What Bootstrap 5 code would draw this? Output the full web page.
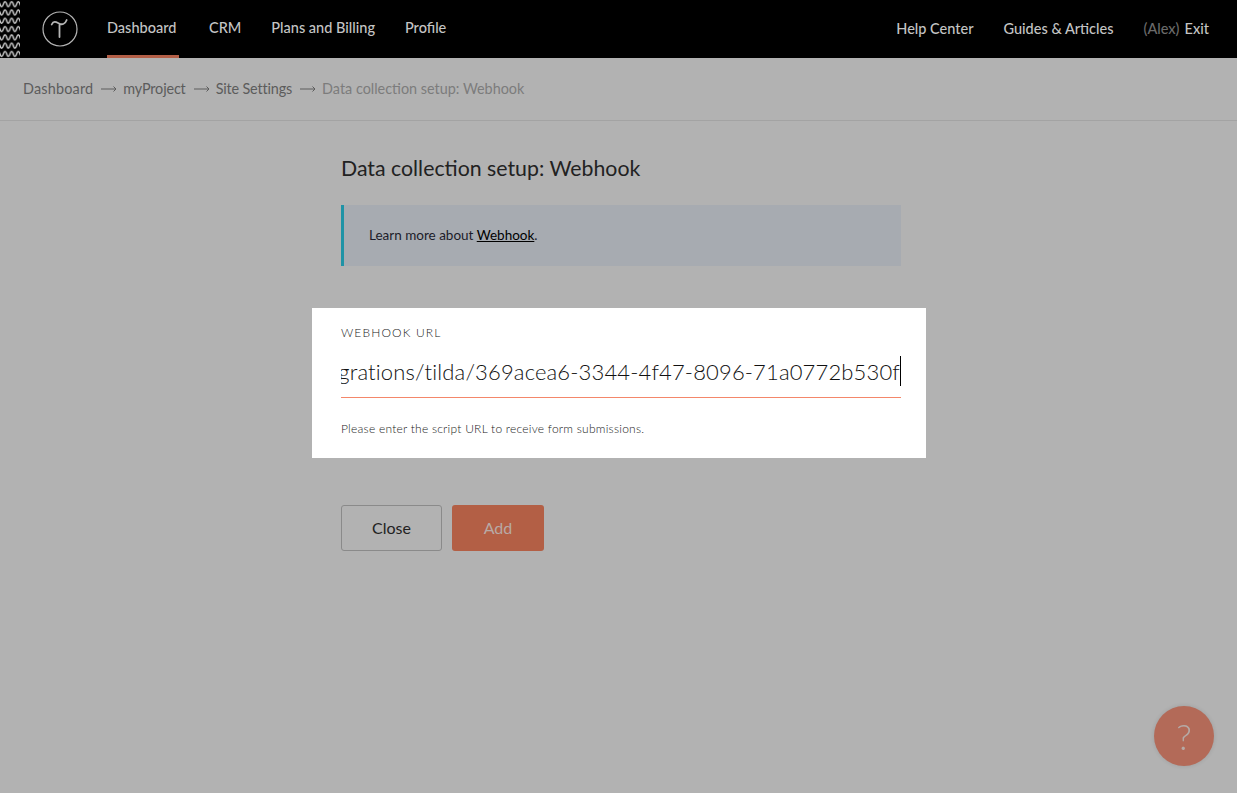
<!DOCTYPE html>
<html lang="en">
<head>
    <meta charset="UTF-8">
    <meta name="viewport" content="width=device-width, initial-scale=1.0">
    <title>Data collection setup: Webhook</title>
    <link href="https://cdn.jsdelivr.net/npm/bootstrap@5.3.0/dist/css/bootstrap.min.css" rel="stylesheet">
    <style>
        body {
            background-color: #b2b2b2;
            font-family: "Lato", "Liberation Sans", sans-serif;
            height: 793px;
            overflow: hidden;
        }
        .top-bar {
            height: 58px;
            background-color: #000;
            padding-right: 28px;
        }
        .wave-strip {
            width: 20px;
            height: 58px;
            flex: none;
        }
        .logo-mark {
            width: 36px;
            height: 36px;
            margin: 0 29px 0 22px;
            flex: none;
        }
        .top-links {
            gap: 30px;
        }
        .top-link {
            height: 58px;
            display: flex;
            align-items: center;
            color: #c4c4c4;
            font-size: 14.5px;
            font-weight: 500;
            text-decoration: none;
            white-space: nowrap;
            box-sizing: border-box;
        }
        .top-links-main .top-link {
            padding-bottom: 2px;
        }
        .top-link.current {
            border-bottom: 3px solid #b35f47;
            padding-top: 1px;
            padding-bottom: 0;
            width: 72px;
        }
        .user-name {
            color: #6a6a6a;
            margin-right: 5px;
        }
        .crumb-bar {
            height: 63px;
            padding-left: 23px;
            border-bottom: 1px solid #a3a3a3;
            font-size: 14.4px;
            color: #5c5c5c;
        }
        .crumb-bar a {
            color: #5c5c5c;
            text-decoration: none;
        }
        .crumb-first {
            letter-spacing: .2px;
        }
        .crumb-mid {
            letter-spacing: -.15px;
        }
        .crumb-arrow {
            width: 16px;
            height: 8px;
            margin: 0 6px 0 8px;
        }
        .crumb-last {
            color: #7c7c7c;
        }
        .setup-col {
            width: 560px;
            margin-left: 341px;
        }
        .setup-title {
            font-size: 21.3px;
            font-weight: 400;
            line-height: 30px;
            color: #222;
            margin: 32px 0 22px;
        }
        .info-note {
            height: 61px;
            padding-left: 25px;
            background-color: #a7abb1;
            border-left: 3px solid #1f93a6;
            font-size: 13.5px;
            color: #1c1c2a;
        }
        .info-note a {
            color: #000;
        }
        .hook-panel {
            width: 614px;
            height: 150px;
            margin: 42px 0 47px -29px;
            padding: 17px 25px 0 29px;
            background-color: #fff;
        }
        .hook-label {
            font-size: 12px;
            line-height: 16px;
            letter-spacing: 1.15px;
            color: #222;
            font-weight: 300;
        }
        .hook-field {
            height: 46px;
            margin-top: 11px;
            padding-top: 3px;
            border-bottom: 1px solid #f4876a;
            font-size: 22px;
            font-weight: 300;
            line-height: 34px;
            color: #111;
            white-space: nowrap;
            overflow: hidden;
            letter-spacing: .15px;
        }
        .hook-caret {
            display: inline-block;
            flex: none;
            width: 1px;
            height: 30px;
            margin-top: 1px;
            background-color: #000;
        }
        .hook-hint {
            font-size: 12px;
            line-height: 16px;
            font-weight: 300;
            color: #222;
            margin-top: 23px;
            letter-spacing: .24px;
        }
        .btn-close-setup, .btn-add-setup {
            height: 46px;
            font-size: 16px;
            border-radius: 3px;
            padding: 0;
        }
        .btn-close-setup {
            width: 101px;
            background-color: transparent;
            border: 1px solid #8a8a8a;
            color: #222;
        }
        .btn-add-setup {
            width: 92px;
            background-color: #b35f45;
            border: 0;
            color: #b8aaa5;
        }
        .setup-actions {
            gap: 10px;
        }
        .help-bubble {
            position: fixed;
            left: 1154px;
            top: 706px;
            width: 60px;
            height: 60px;
            border-radius: 50%;
            background-color: #b36a58;
            color: #b5aaa6;
            font-size: 36px;
            font-weight: 300;
            box-shadow: 0 0 4px rgba(0, 0, 0, .12);
        }
    </style>
</head>
<body>
    <nav class="top-bar d-flex align-items-center position-relative">
        <svg class="wave-strip" viewBox="0 0 20 58">
            <defs>
                <pattern id="waves" width="6.67" height="8.3" patternUnits="userSpaceOnUse">
                    <path d="M-3.33 4.150Q-1.670 -1 0 4.150T3.330 4.150T6.670 4.150T10 4.150" fill="none" stroke="#d0d0d0" stroke-width="1.400"/>
                </pattern>
            </defs>
            <rect width="20" height="58" fill="url(#waves)"/>
        </svg>
        <svg class="logo-mark" viewBox="0 0 36 36">
            <circle cx="18" cy="18" r="17" fill="none" stroke="#b5b5b5" stroke-width="1.200"/>
            <path d="M17.500 13V26M9.700 13.500C11.500 9.500 14 11 17 12.500S23 13.500 24.700 9" fill="none" stroke="#b5b5b5" stroke-width="1.800" stroke-linecap="round"/>
        </svg>
        <div class="d-flex top-links top-links-main flex-grow-1">
            <a class="top-link current" href="#">Dashboard</a>
            <a class="top-link" href="#">CRM</a>
            <a class="top-link" href="#">Plans and Billing</a>
            <a class="top-link" href="#">Profile</a>
        </div>
        <div class="d-flex top-links">
            <a class="top-link" href="#">Help Center</a>
            <a class="top-link" href="#">Guides &amp; Articles</a>
            <a class="top-link" href="#"><span class="user-name">(Alex)</span>Exit</a>
        </div>
    </nav>

    <div class="crumb-bar d-flex align-items-center">
        <a class="crumb-first" href="#">Dashboard</a>
        <svg class="crumb-arrow" viewBox="0 0 16 8"><path d="M0 4H15M12.500 1.500L15 4l-2.500 2.500" fill="none" stroke="#5c5c5c"/></svg>
        <a class="crumb-mid" href="#">myProject</a>
        <svg class="crumb-arrow" viewBox="0 0 16 8"><path d="M0 4H15M12.500 1.500L15 4l-2.500 2.500" fill="none" stroke="#5c5c5c"/></svg>
        <a class="crumb-mid" href="#">Site Settings</a>
        <svg class="crumb-arrow" viewBox="0 0 16 8"><path d="M0 4H15M12.500 1.500L15 4l-2.500 2.500" fill="none" stroke="#5c5c5c"/></svg>
        <span class="crumb-last">Data collection setup: Webhook</span>
    </div>

    <main class="setup-col">
        <h1 class="setup-title">Data collection setup: Webhook</h1>
        <div class="info-note d-flex align-items-center">
            <span>Learn more about <a href="#">Webhook</a>.</span>
        </div>
        <div class="hook-panel">
            <div class="hook-label">WEBHOOK URL</div>
            <div class="hook-field d-flex justify-content-end">
                <span>integrations/tilda/369acea6-3344-4f47-8096-71a0772b530f</span><span class="hook-caret"></span>
            </div>
            <div class="hook-hint">Please enter the script URL to receive form submissions.</div>
        </div>
        <div class="d-flex setup-actions">
            <button type="button" class="btn btn-close-setup">Close</button>
            <button type="button" class="btn btn-add-setup">Add</button>
        </div>
    </main>

    <div class="help-bubble d-flex align-items-center justify-content-center">?</div>

    <script src="https://cdn.jsdelivr.net/npm/bootstrap@5.3.0/dist/js/bootstrap.bundle.min.js"></script>
</body>
</html>
